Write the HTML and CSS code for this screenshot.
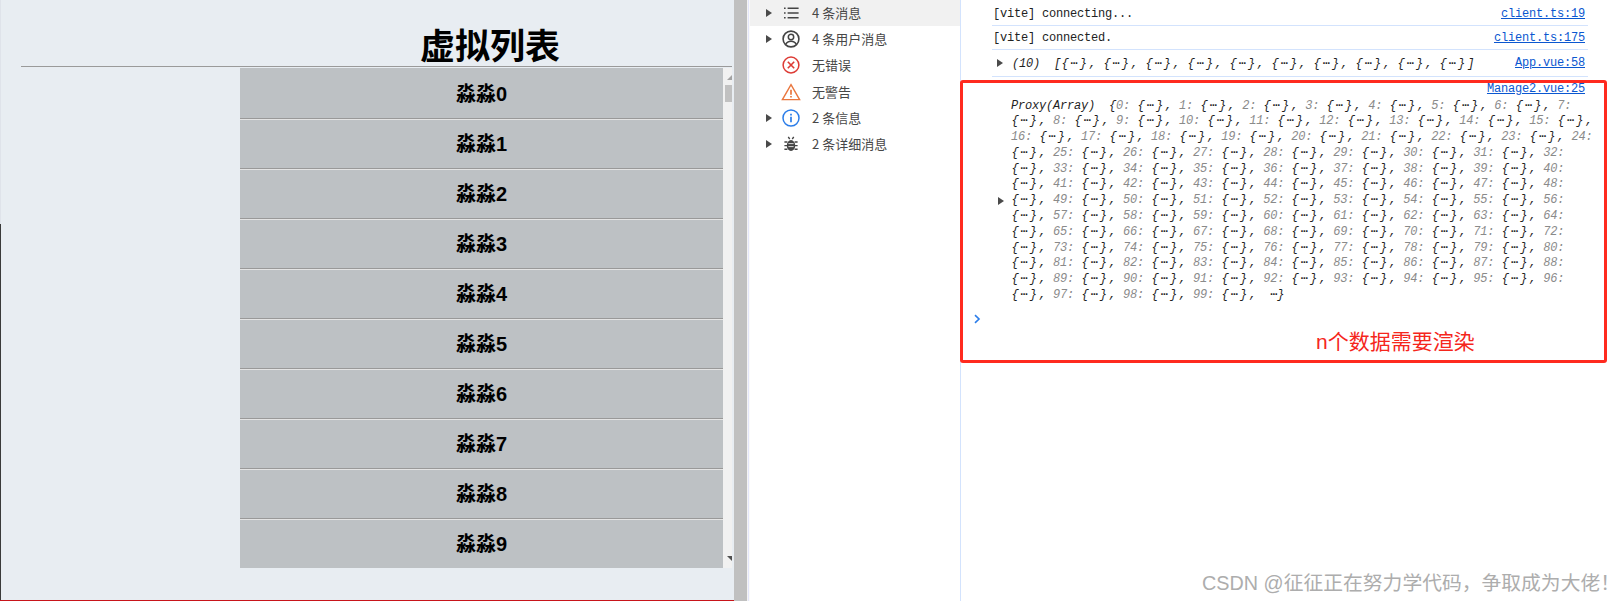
FILE: index.html
```html
<!DOCTYPE html>
<html lang="zh-CN">
<head>
<meta charset="utf-8">
<title>虚拟列表</title>
<link rel="stylesheet" href="styles.css">
</head>
<body>
<div class="shot">
  <section class="app">
    <h1 class="title">虚拟列表</h1>
    <div class="rule"></div>
    <div class="viewport">
      <div class="list">
        <div class="item">淼淼0</div>
        <div class="item">淼淼1</div>
        <div class="item">淼淼2</div>
        <div class="item">淼淼3</div>
        <div class="item">淼淼4</div>
        <div class="item">淼淼5</div>
        <div class="item">淼淼6</div>
        <div class="item">淼淼7</div>
        <div class="item">淼淼8</div>
        <div class="item">淼淼9</div>
      </div>
      <div class="scrollbar">
        <span class="arrow-up"></span>
        <span class="thumb"></span>
        <span class="arrow-down"></span>
      </div>
    </div>
  </section>
  <div class="gutter"></div>
  <aside class="sidebar">
    <div class="filter selected"><span class="caret"></span><svg class="icon" viewBox="0 0 20 20"><path d="M3 5.2h1.6M3 10h1.6M3 14.8h1.6M6.6 5.2h11M6.6 10h11M6.6 14.8h11" fill="none" stroke="#444" stroke-width="1.6"/></svg><span class="label">4 条消息</span></div>
    <div class="filter"><span class="caret"></span><svg class="icon" viewBox="0 0 20 20"><circle cx="10" cy="10" r="7.9" fill="none" stroke="#444" stroke-width="1.6"/><circle cx="10" cy="8" r="2.7" fill="none" stroke="#444" stroke-width="1.5"/><path d="M4.8 15.4c1-2.4 3-3.1 5.2-3.1s4.2.7 5.2 3.1" fill="none" stroke="#444" stroke-width="1.5"/></svg><span class="label">4 条用户消息</span></div>
    <div class="filter"><span class="caret none"></span><svg class="icon" viewBox="0 0 20 20"><circle cx="10" cy="10" r="7.9" fill="none" stroke="#dd3b35" stroke-width="1.5"/><path d="M6.8 6.8l6.4 6.4M13.2 6.8l-6.4 6.4" fill="none" stroke="#dd3b35" stroke-width="1.6"/></svg><span class="label">无错误</span></div>
    <div class="filter"><span class="caret none"></span><svg class="icon" viewBox="0 0 20 20"><path d="M10 2.6l8.6 15H1.4z" fill="none" stroke="#e9773f" stroke-width="1.4"/><path d="M10 7.8v5M10 14v1.6" fill="none" stroke="#e9773f" stroke-width="1.7"/></svg><span class="label">无警告</span></div>
    <div class="filter"><span class="caret"></span><svg class="icon" viewBox="0 0 20 20"><circle cx="10" cy="10" r="8" fill="none" stroke="#2b7de9" stroke-width="1.5"/><path d="M10 8.8v5.4M10 5.8v1.6" fill="none" stroke="#2b7de9" stroke-width="1.7"/></svg><span class="label">2 条信息</span></div>
    <div class="filter"><span class="caret"></span><svg class="icon" viewBox="0 0 20 20"><ellipse cx="10" cy="11.5" rx="4.2" ry="5.4" fill="#444"/><path d="M7.3 2.8l1.4 2.4M12.7 2.8l-1.4 2.4M3.4 8h3M3.4 11.6h3M3.4 15.2h3M13.6 8h3M13.6 11.6h3M13.6 15.2h3" fill="none" stroke="#444" stroke-width="1.4"/><path d="M7.4 9.6h5.2M7.4 12.6h5.2" fill="none" stroke="#d8d8d8" stroke-width="1"/></svg><span class="label">2 条详细消息</span></div>
  </aside>
  <main class="console">
    <div class="row row-a"><span>[vite] connecting...</span><a class="src" href="#">client.ts:19</a></div>
    <div class="row row-b"><span>[vite] connected.</span><a class="src" href="#">client.ts:175</a></div>
    <div class="row row-c"><span class="caret log-caret"></span><span class="obj head-obj">(10)  [<b>{⋯}</b>, <b>{⋯}</b>, <b>{⋯}</b>, <b>{⋯}</b>, <b>{⋯}</b>, <b>{⋯}</b>, <b>{⋯}</b>, <b>{⋯}</b>, <b>{⋯}</b>, <b>{⋯}</b>]</span><a class="src" href="#">App.vue:58</a></div>
    <div class="entry">
      <div class="entry-src"><a class="src" href="#">Manage2.vue:25</a></div>
      <div class="obj lines">
        <div class="line">Proxy(Array)  {<i>0:</i> <b>{⋯}</b>, <i>1:</i> <b>{⋯}</b>, <i>2:</i> <b>{⋯}</b>, <i>3:</i> <b>{⋯}</b>, <i>4:</i> <b>{⋯}</b>, <i>5:</i> <b>{⋯}</b>, <i>6:</i> <b>{⋯}</b>, <i>7:</i></div>
        <div class="line"><b>{⋯}</b>, <i>8:</i> <b>{⋯}</b>, <i>9:</i> <b>{⋯}</b>, <i>10:</i> <b>{⋯}</b>, <i>11:</i> <b>{⋯}</b>, <i>12:</i> <b>{⋯}</b>, <i>13:</i> <b>{⋯}</b>, <i>14:</i> <b>{⋯}</b>, <i>15:</i> <b>{⋯}</b>,</div>
        <div class="line"><i>16:</i> <b>{⋯}</b>, <i>17:</i> <b>{⋯}</b>, <i>18:</i> <b>{⋯}</b>, <i>19:</i> <b>{⋯}</b>, <i>20:</i> <b>{⋯}</b>, <i>21:</i> <b>{⋯}</b>, <i>22:</i> <b>{⋯}</b>, <i>23:</i> <b>{⋯}</b>, <i>24:</i></div>
        <div class="line"><b>{⋯}</b>, <i>25:</i> <b>{⋯}</b>, <i>26:</i> <b>{⋯}</b>, <i>27:</i> <b>{⋯}</b>, <i>28:</i> <b>{⋯}</b>, <i>29:</i> <b>{⋯}</b>, <i>30:</i> <b>{⋯}</b>, <i>31:</i> <b>{⋯}</b>, <i>32:</i></div>
        <div class="line"><b>{⋯}</b>, <i>33:</i> <b>{⋯}</b>, <i>34:</i> <b>{⋯}</b>, <i>35:</i> <b>{⋯}</b>, <i>36:</i> <b>{⋯}</b>, <i>37:</i> <b>{⋯}</b>, <i>38:</i> <b>{⋯}</b>, <i>39:</i> <b>{⋯}</b>, <i>40:</i></div>
        <div class="line"><b>{⋯}</b>, <i>41:</i> <b>{⋯}</b>, <i>42:</i> <b>{⋯}</b>, <i>43:</i> <b>{⋯}</b>, <i>44:</i> <b>{⋯}</b>, <i>45:</i> <b>{⋯}</b>, <i>46:</i> <b>{⋯}</b>, <i>47:</i> <b>{⋯}</b>, <i>48:</i></div>
        <div class="line has-caret"><span class="caret line-caret"></span><b>{⋯}</b>, <i>49:</i> <b>{⋯}</b>, <i>50:</i> <b>{⋯}</b>, <i>51:</i> <b>{⋯}</b>, <i>52:</i> <b>{⋯}</b>, <i>53:</i> <b>{⋯}</b>, <i>54:</i> <b>{⋯}</b>, <i>55:</i> <b>{⋯}</b>, <i>56:</i></div>
        <div class="line"><b>{⋯}</b>, <i>57:</i> <b>{⋯}</b>, <i>58:</i> <b>{⋯}</b>, <i>59:</i> <b>{⋯}</b>, <i>60:</i> <b>{⋯}</b>, <i>61:</i> <b>{⋯}</b>, <i>62:</i> <b>{⋯}</b>, <i>63:</i> <b>{⋯}</b>, <i>64:</i></div>
        <div class="line"><b>{⋯}</b>, <i>65:</i> <b>{⋯}</b>, <i>66:</i> <b>{⋯}</b>, <i>67:</i> <b>{⋯}</b>, <i>68:</i> <b>{⋯}</b>, <i>69:</i> <b>{⋯}</b>, <i>70:</i> <b>{⋯}</b>, <i>71:</i> <b>{⋯}</b>, <i>72:</i></div>
        <div class="line"><b>{⋯}</b>, <i>73:</i> <b>{⋯}</b>, <i>74:</i> <b>{⋯}</b>, <i>75:</i> <b>{⋯}</b>, <i>76:</i> <b>{⋯}</b>, <i>77:</i> <b>{⋯}</b>, <i>78:</i> <b>{⋯}</b>, <i>79:</i> <b>{⋯}</b>, <i>80:</i></div>
        <div class="line"><b>{⋯}</b>, <i>81:</i> <b>{⋯}</b>, <i>82:</i> <b>{⋯}</b>, <i>83:</i> <b>{⋯}</b>, <i>84:</i> <b>{⋯}</b>, <i>85:</i> <b>{⋯}</b>, <i>86:</i> <b>{⋯}</b>, <i>87:</i> <b>{⋯}</b>, <i>88:</i></div>
        <div class="line"><b>{⋯}</b>, <i>89:</i> <b>{⋯}</b>, <i>90:</i> <b>{⋯}</b>, <i>91:</i> <b>{⋯}</b>, <i>92:</i> <b>{⋯}</b>, <i>93:</i> <b>{⋯}</b>, <i>94:</i> <b>{⋯}</b>, <i>95:</i> <b>{⋯}</b>, <i>96:</i></div>
        <div class="line"><b>{⋯}</b>, <i>97:</i> <b>{⋯}</b>, <i>98:</i> <b>{⋯}</b>, <i>99:</i> <b>{⋯}</b>,  ⋯}</div>
      </div>
      <div class="prompt"><svg class="chevron" viewBox="0 0 8 10"><path d="M2 1.2L6 5 2 8.8" fill="none" stroke="#2b7de9" stroke-width="1.6"/></svg></div>
    </div>
  </main>
  <div class="annotation-box"><span class="annotation">n个数据需要渲染</span></div>
  <div class="watermark">CSDN @征征正在努力学代码，争取成为大佬！</div>
</div>
</body>
</html>
```
FILE: styles.css
```css
* { box-sizing: border-box; }
html, body { margin: 0; padding: 0; background: #fff; }
.shot {
  position: relative;
  display: flex;
  width: 1620px;
  height: 601px;
  overflow: hidden;
  font-family: "Liberation Sans", "Noto Sans CJK SC", sans-serif;
}

/* left: the virtual list app */
.app {
  width: 734px;
  flex: none;
  padding: 0 2px 0 21px;
  background: linear-gradient(#dfe3ea 224px, #3a3a3a 224px) 0 0 / 1px 100% no-repeat, #e8edf2;
  border-bottom: 1px solid #c8141a;
}
.title {
  margin: 0;
  height: 66px;
  padding: 26px 0 0 227px;
  font-size: 35px;
  line-height: 42px;
  font-weight: 700;
  color: #000;
  text-align: center;
}
.rule {
  height: 2px;
  background: linear-gradient(#9a9a9a 50%, #e8edf2 50%);
}
.viewport {
  display: flex;
  height: 500px;
  margin-left: 219px;
}
.list {
  flex: 1;
  height: 500px;
  padding-top: 2px;
  overflow: hidden;
  background: #bdc1c4;
}
.item {
  height: 50px;
  border-bottom: 1px solid #e4e4e4;
  box-shadow: inset 0 -1px 0 #999;
  font-size: 20px;
  font-weight: 700;
  line-height: 48px;
  text-align: center;
  color: #000;
  background: #bdc1c4;
}
.scrollbar {
  width: 9px;
  flex: none;
  display: flex;
  flex-direction: column;
  align-items: flex-end;
  padding: 7px 0;
  background: #f1f1f1;
}
.arrow-up, .arrow-down { display: block; width: 5px; height: 5px; }
.arrow-up { background: #a3a3a3; clip-path: polygon(100% 0, 100% 100%, 0 100%); }
.arrow-down { margin-top: auto; background: #505050; clip-path: polygon(0 0, 100% 0, 100% 100%); }
.thumb { display: block; width: 7px; height: 17px; margin-top: 5px; background: #c1c1c1; }

.gutter {
  width: 16px;
  flex: none;
  background: linear-gradient(90deg, #c0c0c0 13px, #f4f4f4 13px, #f4f4f4 14px, #e4e6fa 14px, #e4e6fa 15px, #fafafa 15px);
}

/* devtools sidebar */
.sidebar {
  width: 211px;
  flex: none;
  border-right: 1px solid #d3e3fd;
  font-family: "Noto Sans CJK SC", "Liberation Sans", sans-serif;
}
.filter {
  display: flex;
  align-items: center;
  height: 26.2px;
  padding-left: 16px;
}
.filter.selected { background: #f1f1f1; }
.caret {
  display: block;
  width: 0;
  height: 0;
  flex: none;
  border-left: 6px solid #4a4a4a;
  border-top: 4px solid transparent;
  border-bottom: 4px solid transparent;
}
.caret.none { border-left-color: transparent; }
.icon { display: block; width: 20px; height: 20px; flex: none; margin-left: 9px; }
.label { margin-left: 11px; font-size: 13px; line-height: 20px; color: #474747; }

/* console */
.console {
  flex: 1;
  min-width: 0;
  padding: 0 32px 0 31px;
  font-family: "Liberation Mono", "DejaVu Sans Mono", monospace;
  font-size: 12px;
  letter-spacing: -0.2px;
  color: #222;
}
.row {
  display: flex;
  align-items: center;
  white-space: pre;
  border-bottom: 1px solid #d3e3fd;
  padding-left: 1px;
}
.row-a { height: 26px; padding-top: 2px; }
.row-b { height: 24px; padding-top: 1px; }
.row-c { height: 27px; padding-left: 5px; }
.src {
  margin-left: auto;
  margin-right: 3px;
  color: #0b57d0;
  text-decoration: underline;
}
.log-caret { margin-right: 9px; }
.obj { font-style: italic; color: #1f1f1f; }
.head-obj { white-space: pre; }
.obj b { display: inline-block; width: 28px; padding-left: 0.4px; font-weight: 400; letter-spacing: 2px; }
.obj i { color: #8a8a8a; }
.entry { position: relative; padding-top: 4px; }
.entry-src { display: flex; height: 16px; line-height: 16px; }
.lines { margin-top: 1.5px; padding-left: 19px; line-height: 15.78px; }
.line { white-space: pre; }
.has-caret { position: relative; }
.line-caret { position: absolute; left: -13px; top: 4px; }
.prompt { height: 16px; margin-top: 10px; }
.chevron { display: block; width: 8px; height: 10px; margin-left: -19px; }

/* annotation drawn over the console */
.annotation-box {
  position: absolute;
  left: 960px;
  top: 80px;
  width: 647px;
  height: 283px;
  border: 3px solid #ff2a1f;
  border-radius: 3px;
}
.annotation {
  position: absolute;
  left: 353px;
  top: 245px;
  font-family: "Liberation Sans", "Noto Sans CJK SC", sans-serif;
  font-size: 21px;
  line-height: 28px;
  color: #f5261c;
  white-space: nowrap;
}
.watermark {
  position: absolute;
  right: 0;
  top: 569px;
  font-size: 19.8px;
  line-height: 28px;
  color: #adadad;
  white-space: nowrap;
}
```
